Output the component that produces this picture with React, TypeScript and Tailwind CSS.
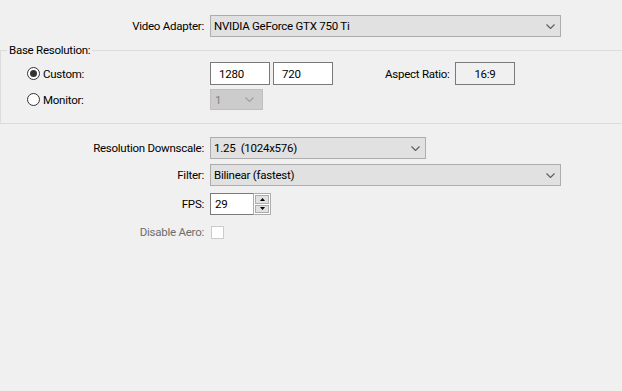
import React from "react";

const Chevron = ({ color = "#606060" }: { color?: string }) => (
  <svg width="9" height="5" viewBox="0 0 9 5" className="block">
    <path d="M0.5 0.5 L4.5 4.5 L8.5 0.5" fill="none" stroke={color} strokeWidth="1.2" />
  </svg>
);

const Combo = ({ value, width }: { value: string; width: string }) => (
  <div
    className={`${width} h-[22px] flex items-center justify-between bg-[#e1e1e1] border border-[#adadad] pl-[3px] pr-[5px]`}
  >
    <span className="whitespace-pre">{value}</span>
    <Chevron />
  </div>
);

const Label = ({ text, muted }: { text: string; muted?: boolean }) => (
  <div className={`w-[205px] pr-[1px] text-right whitespace-nowrap ${muted ? "text-[#6d6d6d]" : ""}`}>{text}</div>
);

const Radio = ({ checked }: { checked?: boolean }) => (
  <span className="w-[13px] h-[13px] rounded-full border border-[#333] bg-white flex items-center justify-center">
    {checked && <span className="w-[7px] h-[7px] rounded-full bg-[#333]" />}
  </span>
);

const TextBox = ({ value }: { value: string }) => (
  <div className="w-[60px] h-[23px] bg-white border border-[#7a7a7a] flex items-center pl-[8px]">{value}</div>
);

export default function App() {
  return (
    <div className="w-[622px] h-[391px] overflow-hidden bg-[#f0f0f0] text-[11.5px] leading-[16px] tracking-[-0.25px] text-black font-['Roboto','Noto_Sans',sans-serif]">
      {/* Video adapter */}
      <div className="flex items-center pt-[15px]">
        <Label text="Video Adapter:" />
        <div className="ml-[5px]">
          <Combo value="NVIDIA GeForce GTX 750 Ti" width="w-[351px]" />
        </div>
      </div>

      {/* Base resolution group */}
      <div className="relative mt-[13px] h-[74px] border-t border-b border-l border-[#dcdcdc]">
        <span className="absolute left-[6px] top-[-9px] px-[2px] bg-[#f0f0f0] whitespace-nowrap">Base Resolution:</span>

        <div className="flex items-center h-[23px] mt-[11px]">
          <label className="w-[209px] flex items-center gap-[3px] pl-[26px]">
            <Radio checked />
            <span>Custom:</span>
          </label>
          <TextBox value="1280" />
          <div className="ml-[3px]">
            <TextBox value="720" />
          </div>
          <span className="ml-[52px] w-[70px] whitespace-nowrap">Aspect Ratio:</span>
          <div className="w-[60px] h-[23px] border border-[#7a7a7a] flex items-center justify-center">16:9</div>
        </div>

        <div className="flex items-center h-[21px] mt-[4px]">
          <label className="w-[209px] flex items-center gap-[3px] pl-[26px]">
            <Radio />
            <span>Monitor:</span>
          </label>
          <div className="w-[53px] h-[21px] bg-[#cccccc] border border-[#bfbfbf] flex items-center justify-between pl-[4px] pr-[8px] text-[#838383]">
            <span>1</span>
            <Chevron color="#a0a0a0" />
          </div>
        </div>
      </div>

      {/* Output settings */}
      <div className="flex items-center mt-[13px]">
        <Label text="Resolution Downscale:" />
        <div className="ml-[5px]">
          <Combo value="1.25  (1024x576)" width="w-[216px]" />
        </div>
      </div>

      <div className="flex items-center mt-[5px]">
        <Label text="Filter:" />
        <div className="ml-[5px]">
          <Combo value="Bilinear (fastest)" width="w-[351px]" />
        </div>
      </div>

      <div className="flex items-center mt-[7px]">
        <Label text="FPS:" />
        <div className="ml-[5px] flex h-[22px]">
          <div className="w-[43px] h-full bg-white border border-[#7a7a7a] border-r-0 flex items-center pl-[4px]">29</div>
          <div className="w-[18px] h-full bg-white border border-[#adadad] flex flex-col p-[1px] gap-[1px]">
            <div className="flex-1 bg-[#e1e1e1] border border-[#adadad] flex items-center justify-center">
              <svg width="5" height="3" viewBox="0 0 5 3">
                <path d="M2.5 0 L5 3 L0 3 Z" fill="#000" />
              </svg>
            </div>
            <div className="flex-1 bg-[#e1e1e1] border border-[#adadad] flex items-center justify-center">
              <svg width="5" height="3" viewBox="0 0 5 3">
                <path d="M0 0 L5 0 L2.5 3 Z" fill="#000" />
              </svg>
            </div>
          </div>
        </div>
      </div>

      <div className="flex items-center mt-[9px]">
        <Label text="Disable Aero:" muted />
        <div className="ml-[6px] w-[13px] h-[13px] bg-white border border-[#cccccc]" />
      </div>
    </div>
  );
}
